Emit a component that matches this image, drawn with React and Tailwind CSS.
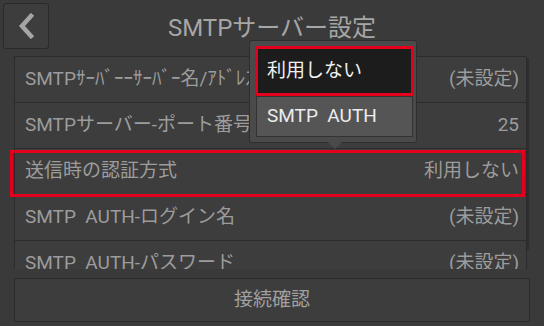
import React from "react";

const font = { fontFamily: '"Roboto", "Noto Sans CJK JP", sans-serif' };

function Row({ label, value }) {
  return (
    <div className="flex h-[46px] shrink-0 items-center justify-between border-b border-[#2c2c2c] pl-[10px] pr-[7px] text-[19px] text-[#9c9c9c]">
      <span className="whitespace-nowrap">{label}</span>
      <span className="whitespace-nowrap">{value}</span>
    </div>
  );
}

export default function App() {
  return (
    <div
      className="relative h-[326px] w-[544px] overflow-hidden bg-[#3a3a3a]"
      style={font}
    >
      {/* Header */}
      <div className="relative flex h-[56px] items-start">
        <div className="ml-[3px] mt-[3px] flex h-[46px] w-[46px] items-center justify-center rounded-[3px] border border-[#2a2a2a] bg-[#3d3d3d]">
          <svg width="18" height="26" viewBox="0 0 18 26">
            <path d="M14 3 L5 13 L14 23" fill="none" stroke="#a5a5a5" strokeWidth="4.5" strokeLinecap="square" />
          </svg>
        </div>
        <div className="absolute left-0 right-0 top-[12px] text-center text-[24px] leading-[32px] text-[#a6a6a6]">
          SMTPサーバー設定
        </div>
      </div>

      {/* List */}
      <div className="flex">
        <div className="ml-[14px] flex h-[213px] w-[513px] flex-col overflow-hidden border-l border-r border-t border-[#2c2c2c] bg-[#3d3d3d]">
          <Row label="SMTPｻｰﾊﾞｰｰｻｰﾊﾞｰ名/ｱﾄﾞﾚｽ" value="(未設定)" />
          <Row label="SMTPサーバー-ポート番号" value="25" />
          <Row label="送信時の認証方式" value="利用しない" />
          <Row label={"SMTP\u00a0\u00a0AUTH-ログイン名"} value="(未設定)" />
          <Row label={"SMTP\u00a0\u00a0AUTH-パスワード"} value="(未設定)" />
        </div>
        <div className="mt-[2px] h-[192px] w-[2px] bg-[#2e2e2e]" />
      </div>

      {/* Button */}
      <div className="ml-[14px] mt-[9px] flex h-[44px] w-[516px] items-center justify-center rounded-[2px] border border-[#2a2a2a] bg-[#3d3d3d] text-[19px] text-[#a0a0a0]">
        接続確認
      </div>

      {/* Red highlight over row 3 */}
      <div className="absolute left-[10px] top-[150px] h-[47px] w-[515px] border-[3px] border-[#e4001c]" />

      {/* Popup */}
      <div className="absolute left-[249px] top-[40px] flex h-[103px] w-[168px] flex-col rounded-[3px] border border-[#2e2e2e] bg-[#4a4a4a] pl-[5px] pr-[2px] pt-[5px]">
        <div className="flex h-[50px] items-center border-[3px] border-[#e4001c] bg-[#1c1c1c] pl-[9px] text-[19px] text-[#f0f0f0]">
          利用しない
        </div>
        <div className="mx-[1px] flex h-[41px] items-center border border-[#333] bg-[#555555] pl-[10px] text-[19px] text-[#ececec]">
          SMTP&nbsp;&nbsp;AUTH
        </div>
      </div>
      <svg className="absolute left-[328px] top-[142px]" width="14" height="8" viewBox="0 0 14 8">
        <path d="M0 0 L7 7 L14 0 Z" fill="#4a4a4a" />
      </svg>
    </div>
  );
}
